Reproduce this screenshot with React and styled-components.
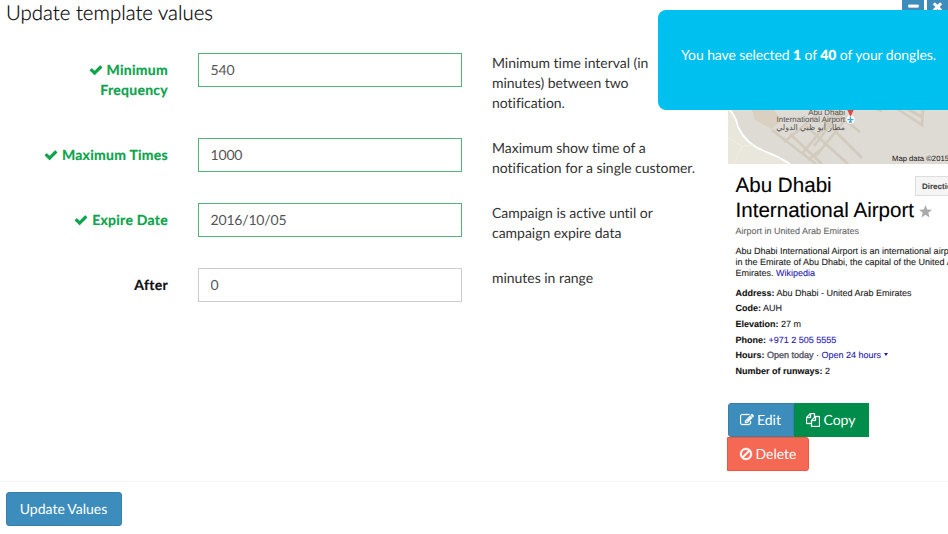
import React from 'react';
import styled, { createGlobalStyle } from 'styled-components';

const GlobalStyle = createGlobalStyle`
  * { box-sizing: border-box; }
  html, body { margin: 0; background: #fff; overflow: hidden; }
  body {
    font: 400 14px/20px Lato, sans-serif;
    color: #333;
    text-rendering: geometricPrecision;
  }
`;

const Page = styled.div`
  position: relative;
  display: flex;
  flex-direction: column;
  width: 948px;
  height: 534px;
  overflow: hidden;
`;
const Title = styled.h3`
  flex: none;
  margin: 0;
  height: 53px;
  padding: 1px 0 0 6px;
  font-size: 20.4px;
  line-height: 24px;
  font-weight: 300;
  color: #000;
  -webkit-text-stroke: 0.2px #000;
`;
const Body = styled.main`
  display: flex;
  flex: none;
  height: 429px;
  border-bottom: 1px solid #f4f4f4;
`;
const Form = styled.form`
  width: 728px;
  flex: none;
`;
const FormRow = styled.div`
  display: grid;
  grid-template-columns: 168px 264px 210px;
  column-gap: 30px;
  height: ${(p) => p.$height}px;
`;
const Label = styled.label`
  padding-top: 7px;
  padding-left: 30px;
  text-align: right;
  font-weight: 700;
  letter-spacing: 0.27px;
  -webkit-text-stroke: 0.2px currentColor;
  color: ${(p) => (p.$valid ? '#0ca34b' : '#111')};
`;
const Input = styled.input`
  width: 264px;
  height: 34px;
  padding: 0 12px 2px 11.5px;
  border: 1px solid ${(p) => (p.$valid ? '#53b47b' : '#ccc')};
  border-radius: 0;
  outline: 0;
  background: #fff;
  color: #555;
  font: inherit;
  letter-spacing: -0.18px;
  text-rendering: inherit;
`;
const Help = styled.div`
  color: #333;
  letter-spacing: -0.03px;
`;
const Glyph = styled.svg`
  width: ${(p) => p.$size || 14}px;
  height: ${(p) => p.$size || 14}px;
  fill: currentColor;
  vertical-align: -2px;
`;
const Aside = styled.aside`
  flex: none;
  width: 240px;
  margin-top: -53px;
`;
const MapBox = styled.div`
  position: relative;
  height: 164px;
  overflow: hidden;
`;
const MapArt = styled.svg`
  display: block;
`;
const MapLabel = styled.div`
  position: absolute;
  top: 108.5px;
  right: 123px;
  text-align: right;
  font: 7.9px/7.5px "Liberation Sans", sans-serif;
  color: #555;
`;
const Credit = styled.div`
  position: absolute;
  left: 164px;
  top: 154px;
  white-space: nowrap;
  font: 7.7px/10px "Liberation Sans", sans-serif;
  color: #111;
`;
const Info = styled.section`
  position: relative;
  height: 239px;
  padding: 8.5px 0 0 7.5px;
  white-space: nowrap;
  font: 9px/11px "Liberation Sans", sans-serif;
  color: #222;
  -webkit-text-stroke: 0.1px currentColor;
`;
const PlaceName = styled.h2`
  margin: 0;
  font-size: 20.6px;
  line-height: 25.5px;
  font-weight: 400;
  color: #000;
`;
const Star = styled.svg`
  width: 13px;
  height: 13px;
  margin-left: 5px;
  fill: #aaa;
  vertical-align: -1px;
`;
const Directions = styled.div`
  position: absolute;
  left: 187px;
  top: 12px;
  width: 60px;
  height: 20px;
  padding-left: 6px;
  border: 1px solid #ddd;
  background: #f5f5f5;
  font-size: 8px;
  line-height: 19px;
  font-weight: 700;
  color: #444;
`;
const Kind = styled.div`
  margin-top: 2px;
  color: #666;
`;
const Description = styled.p`
  margin: 9.5px 0 6.5px;
`;
const Link = styled.span`
  color: #2518b0;
`;
const Fact = styled.div`
  height: 15.7px;
  line-height: 15.7px;
  b { color: #111; }
`;
const Muted = styled.span`
  color: #555566;
  -webkit-text-stroke: 0.35px #555566;
`;
const Caret = styled.i`
  display: inline-block;
  margin-left: 3px;
  vertical-align: 2px;
  border: 2.5px solid transparent;
  border-top: 3px solid #2518b0;
  border-bottom: 0;
`;
const Actions = styled.div`
  display: flex;
  flex-wrap: wrap;
  width: 160px;
`;
const Button = styled.button`
  height: 34px;
  width: ${(p) => p.$width}px;
  margin: ${(p) => p.$margin || '0'};
  padding: 0 1px 0 0;
  border: 1px solid ${(p) => p.$edge};
  border-radius: ${(p) => p.$radius || '0'};
  background: ${(p) => p.$color};
  color: #fff;
  font: inherit;
  text-rendering: inherit;
  white-space: nowrap;
  word-spacing: -0.6px;
`;
const Footer = styled.footer`
  padding: 10px 6px;
`;
const WindowTools = styled.div`
  position: absolute;
  top: -9px;
  left: 902px;
  display: flex;
  gap: 3px;
`;
const Tool = styled.div`
  display: flex;
  align-items: center;
  justify-content: center;
  width: ${(p) => p.$width}px;
  height: 30px;
  background: #3c8dbc;
  color: #fff;
`;
const Toast = styled.div`
  position: absolute;
  left: 658px;
  top: 10px;
  width: 310px;
  height: 100px;
  padding: 35px 0 0 23px;
  border-radius: 8px;
  background: #00c0ef;
  color: #fff;
  white-space: nowrap;
  letter-spacing: -0.1px;
  b { font-weight: 800; }
`;

const icons = {
  check: 'M1671 566q0 40-28 68l-724 724-136 136q-28 28-68 28t-68-28l-136-136-362-362q-28-28-28-68t28-68l136-136q28-28 68-28t68 28l294 295 656-657q28-28 68-28t68 28l136 136q28 28 28 68z',
  edit: 'M888 1184l116-116-152-152-116 116v56h96v96h56zm440-720q-16-16-33 1l-350 350q-17 17-1 33t33-1l350-350q17-17 1-33zm80 594v190q0 119-84.5 203.5t-203.5 84.5h-832q-119 0-203.5-84.5t-84.5-203.5v-832q0-119 84.5-203.5t203.5-84.5h832q63 0 117 25 15 7 18 23 3 17-9 29l-49 49q-14 14-32 8-23-6-45-6h-832q-66 0-113 47t-47 113v832q0 66 47 113t113 47h832q66 0 113-47t47-113v-126q0-13 9-22l64-64q15-15 35-7t20 29zm-96-738l288 288-672 672h-288v-288zm444 132l-92 92-288-288 92-92q28-28 68-28t68 28l152 152q28 28 28 68t-28 68z',
  copy: 'M1696 384q40 0 68 28t28 68v1216q0 40-28 68t-68 28h-960q-40 0-68-28t-28-68v-288h-544q-40 0-68-28t-28-68v-672q0-40 20-88t48-76l408-408q28-28 76-48t88-20h416q40 0 68 28t28 68v328q68-40 128-40h416zm-544 213l-299 299h299v-299zm-640-384l-299 299h299v-299zm196 647l316-316v-416h-384v416q0 40-28 68t-68 28h-416v640h512v-256q0-40 20-88t48-76zm956 804v-1152h-384v416q0 40-28 68t-68 28h-416v640h896z',
  ban: 'M1440 893q0-161-87-295l-754 753q137 89 297 89 111 0 211.5-43.5t173.5-116.5 116-174.5 43-212.5zm-999 299l755-754q-135-91-300-91-148 0-273 73t-198 199-73 274q0 162 89 299zm1223-299q0 157-61 300t-163.5 246-245 164-298.5 61-298.5-61-245-164-163.5-246-61-300 61-299.5 163.5-245.5 245-164 298.5-61 298.5 61 245 164 163.5 245.5 61 299.5z',
  times: 'M1490 1322q0 40-28 68l-136 136q-28 28-68 28t-68-28l-294-294-294 294q-28 28-68 28t-68-28l-136-136q-28-28-28-68t28-68l294-294-294-294q-28-28-28-68t28-68l136-136q28-28 68-28t68 28l294 294 294-294q28-28 68-28t68 28l136 136q28 28 28 68t-28 68l-294 294 294 294q28 28 28 68z',
  minus: 'M1600 736v192q0 40-28 68t-68 28h-1216q-40 0-68-28t-28-68v-192q0-40 28-68t68-28h1216q40 0 68 28t28 68z',
};

const Icon = ({ name, size }) => (
  <Glyph $size={size} viewBox="0 0 1792 1792">
    <path d={icons[name]} stroke="currentColor" strokeWidth="40" />
  </Glyph>
);

const rows = [
  { label: 'Minimum Frequency', value: '540', help: 'Minimum time interval (in minutes) between two notification.', valid: true, height: 85 },
  { label: 'Maximum Times', value: '1000', help: 'Maximum show time of a notification for a single customer.', valid: true, height: 65 },
  { label: 'Expire Date', value: '2016/10/05', help: 'Campaign is active until or campaign expire data', valid: true, height: 65 },
  { label: 'After', value: '0', help: 'minutes in range', valid: false, height: 65 },
];

const facts = [
  ['Address', 'Abu Dhabi - United Arab Emirates'],
  ['Code', 'AUH'],
  ['Elevation', '27 m'],
  ['Phone', <Link key="p">+971 2 505 5555</Link>],
  ['Hours', <React.Fragment key="h"><Muted>Open today</Muted> · <Link>Open 24 hours</Link><Caret /></React.Fragment>],
  ['Number of runways', '2'],
];

const AirportMap = () => (
  <MapArt width="240" height="164" viewBox="0 0 240 164">
    <rect y="20" width="240" height="144" fill="#dedad4" />
    <path d="M0 100V164H62Q48 155 34 150Q18 142 9 127Q7 112 0 106Z" fill="#e9e6dc" />
    <path d="M24 110h22l7 10-9 9-17-9Z" fill="#d9d0c1" />
    <g fill="none" stroke="#d2cabd" strokeWidth="2.600">
      <path d="M44 130l44 34M56 142l34-28M74 154l34-42M62 134l32 30M78 126l42 38M96 120l38 38M112 112l-26 34M104 110l28 22M120 116l-32 40M92 150l-12 10" />
      <path d="M146 108l8 3M168 108l26 17 1-17M178 108l16 9" />
    </g>
    <path d="M0 108Q8 116 10 127Q18 144 36 151Q50 156 62 164" fill="none" stroke="#fff" strokeWidth="1.800" />
    <path d="M0 138l14 8 12-1M14 146l-8 18" fill="none" stroke="#f1eee4" strokeWidth="1" />
    <circle cx="122.500" cy="119.500" r="4.200" fill="#fff" />
    <path d="M118.500 108h8l-4 9Z" fill="#dd4b3e" />
    <path d="M122.500 117v5M119.500 119.700h6M121 122h3" stroke="#42a5dc" strokeWidth="1.300" />
  </MapArt>
);

export default function App() {
  return (
    <Page>
      <GlobalStyle />
      <Title>Update template values</Title>
      <Body>
        <Form>
          {rows.map((r) => (
            <FormRow key={r.label} $height={r.height}>
              <Label $valid={r.valid}>{r.valid && <Icon name="check" />}{r.valid && ' '}{r.label}</Label>
              <Input $valid={r.valid} defaultValue={r.value} />
              <Help>{r.help}</Help>
            </FormRow>
          ))}
        </Form>
        <Aside>
          <MapBox>
            <AirportMap />
            <MapLabel>Abu Dhabi<br />International Airport<br />مطار أبو ظبي الدولي</MapLabel>
            <Credit>Map data ©2015</Credit>
          </MapBox>
          <Info>
            <PlaceName>
              Abu Dhabi<br />International Airport
              <Star viewBox="0 0 24 24"><path d="M12 0l3.200 8.200 8.800.5-6.800 5.500 2.300 8.800L12 18l-7.500 5 2.300-8.800L0 8.700l8.800-.5Z" /></Star>
            </PlaceName>
            <Directions>Directions</Directions>
            <Kind>Airport in United Arab Emirates</Kind>
            <Description>
              Abu Dhabi International Airport is an international airport<br />
              in the Emirate of Abu Dhabi, the capital of the United Arab<br />
              Emirates. <Link>Wikipedia</Link>
            </Description>
            {facts.map(([name, value]) => <Fact key={name}><b>{name}:</b> {value}</Fact>)}
          </Info>
          <Actions>
            <Button $width={66} $color="#3c8dbc" $edge="#367fa9" $radius="3px 0 0 3px"><Icon name="edit" /> Edit</Button>
            <Button $width={75} $color="#008d4c" $edge="#008d4c"><Icon name="copy" /> Copy</Button>
            <Button $width={82} $margin="0 0 0 -1px" $color="#f56954" $edge="#f4543c" $radius="0 3px 3px 0"><Icon name="ban" /> Delete</Button>
          </Actions>
        </Aside>
      </Body>
      <Footer>
        <Button $width={116} $color="#3c8dbc" $edge="#367fa9" $radius="3px">Update Values</Button>
      </Footer>
      <WindowTools>
        <Tool $width={22}><Icon name="minus" size={13} /></Tool>
        <Tool $width={21}><Icon name="times" size={13} /></Tool>
      </WindowTools>
      <Toast>You have selected <b>1</b> of <b>40</b> of your dongles.</Toast>
    </Page>
  );
}
